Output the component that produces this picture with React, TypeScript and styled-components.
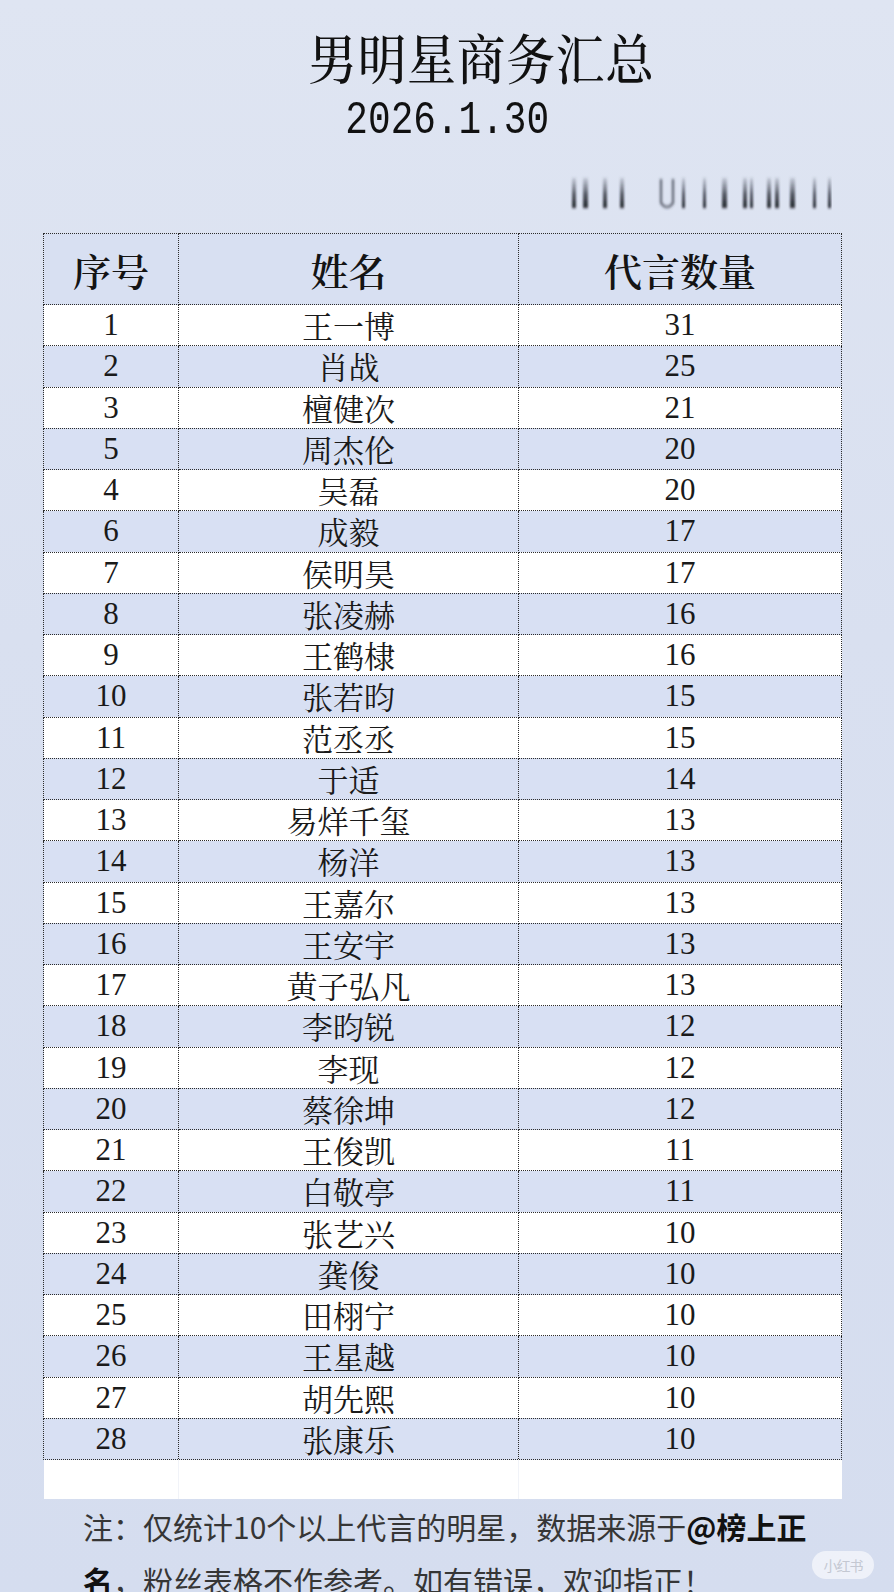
import React from 'react'
import styled, { createGlobalStyle } from 'styled-components'

const CJK = `"Noto Serif CJK SC", "Noto Sans CJK SC", sans-serif`
const SERIF_NUM = `"Liberation Serif", "Noto Sans CJK SC", serif`

const GlobalStyle = createGlobalStyle`
  html, body {
    margin: 0;
    padding: 0;
  }
  body {
    background: #d8dfef;
  }
`

const rows: [string, string, number][] = [
  ['1', '王一博', 31],
  ['2', '肖战', 25],
  ['3', '檀健次', 21],
  ['5', '周杰伦', 20],
  ['4', '吴磊', 20],
  ['6', '成毅', 17],
  ['7', '侯明昊', 17],
  ['8', '张凌赫', 16],
  ['9', '王鹤棣', 16],
  ['10', '张若昀', 15],
  ['11', '范丞丞', 15],
  ['12', '于适', 14],
  ['13', '易烊千玺', 13],
  ['14', '杨洋', 13],
  ['15', '王嘉尔', 13],
  ['16', '王安宇', 13],
  ['17', '黄子弘凡', 13],
  ['18', '李昀锐', 12],
  ['19', '李现', 12],
  ['20', '蔡徐坤', 12],
  ['21', '王俊凯', 11],
  ['22', '白敬亭', 11],
  ['23', '张艺兴', 10],
  ['24', '龚俊', 10],
  ['25', '田栩宁', 10],
  ['26', '王星越', 10],
  ['27', '胡先熙', 10],
  ['28', '张康乐', 10],
]

// blurred strip under the date, roughly where the bars sit
const bars = [
  [2, 4], [13, 5], [33, 4], [50, 4], [112, 3], [133, 3], [152, 5],
  [173, 4], [180, 3], [197, 4], [205, 4], [220, 5], [243, 3], [258, 3],
]

const Page = styled.div`
  position: relative;
  width: 894px;
  height: 1592px;
  overflow: hidden;
  background: linear-gradient(180deg, #dfe5f2 0%, #d9e0f0 40%, #d5ddef 100%);
  padding-top: 30px;
  box-sizing: border-box;
`

const Title = styled.h1`
  margin: 0;
  padding-left: 68px;
  text-align: center;
  font-family: ${CJK};
  font-size: 54px;
  font-weight: 500;
  line-height: 54px;
  letter-spacing: 1px;
  color: #111;
`

const Squeeze = styled.span<{ $x: number }>`
  display: inline-block;
  transform: scaleX(${(p) => p.$x});
  transform-origin: center;
`

const DateLine = styled.div`
  margin-top: 15px;
  text-align: center;
  font-family: "Liberation Mono", monospace;
  font-size: 46px;
  line-height: 44px;
  color: #111;
`

const StripRow = styled.div`
  display: flex;
  justify-content: flex-end;
  padding-right: 62px;
  margin-top: 32px;
  height: 36px;
  margin-bottom: 22px;
`

const Table = styled.table`
  margin-left: 43px;
  width: 795px;
  border-collapse: collapse;
  table-layout: fixed;
`

const HeadCell = styled.th<{ $w: number }>`
  width: ${(p) => p.$w}px;
  height: 70px;
  padding: 0;
  border: 1px dotted #2b2b2b;
  background: #d8e0f2;
  font-family: ${CJK};
  font-size: 38px;
  font-weight: 600;
  color: #141414;
  text-align: center;
`

const Row = styled.tr<{ $blue: boolean }>`
  height: 41.25px;
  background: ${(p) => (p.$blue ? '#d8e0f3' : '#ffffff')};
`

const Cell = styled.td<{ $num?: boolean }>`
  padding: 0;
  border: 1px dotted #2b2b2b;
  text-align: center;
  font-family: ${(p) => (p.$num ? SERIF_NUM : CJK)};
  font-size: 31px;
  line-height: 38px;
  color: #1a1a1a;
`

const BlankCell = styled.td`
  height: 39px;
  padding: 0;
  background: #fff;
  border: none;
  border-right: 1px solid #f1f3f8;
  &:last-child {
    border-right: none;
  }
`

const Footer = styled.div`
  position: relative;
  padding-left: 83px;
  font-family: "Noto Sans CJK SC", sans-serif;
  font-size: 30px;
  line-height: 54px;
  color: #363636;
`

const Line = styled.div`
  white-space: nowrap;
`

const Strong = styled.b`
  font-weight: 700;
  color: #111;
`

const Badge = styled.div`
  position: absolute;
  left: 812px;
  top: 52px;
  width: 62px;
  height: 28px;
  border-radius: 14px;
  background: rgba(255, 255, 255, 0.6);
  color: #c4c8d2;
  font-size: 14px;
  line-height: 28px;
  text-align: center;
  letter-spacing: -1px;
`

const BlurStrip = () => (
  <svg width="262" height="36" viewBox="0 0 262 36">
    <defs>
      <linearGradient id="bar" x1="0" y1="0" x2="0" y2="1">
        <stop offset="0" stopColor="#3a3f4d" stopOpacity="0.15" />
        <stop offset="0.55" stopColor="#2a2e3a" stopOpacity="0.75" />
        <stop offset="1" stopColor="#1b1e27" stopOpacity="0.95" />
      </linearGradient>
      <filter id="soft" x="-20%" y="-20%" width="140%" height="140%">
        <feGaussianBlur stdDeviation="1 1.6" />
      </filter>
    </defs>
    <g filter="url(#soft)">
      {bars.map(([x, w], i) => (
        <rect key={i} x={x} y={3} width={w} height={30} fill="url(#bar)" />
      ))}
      <path
        d="M91 4 V28 Q97 36 103 28 V4"
        fill="none"
        stroke="#3a3f4d"
        strokeOpacity="0.7"
        strokeWidth="2.5"
      />
    </g>
  </svg>
)

export default function App() {
  return (
    <>
      <GlobalStyle />
      <Page>
        <Title>
          <Squeeze $x={0.9}>男明星商务汇总</Squeeze>
        </Title>
        <DateLine>
          <Squeeze $x={0.82}>2026.1.30</Squeeze>
        </DateLine>
        <StripRow>
          <BlurStrip />
        </StripRow>
        <Table>
          <thead>
            <tr>
              <HeadCell $w={134}>序号</HeadCell>
              <HeadCell $w={339}>姓名</HeadCell>
              <HeadCell $w={322}>代言数量</HeadCell>
            </tr>
          </thead>
          <tbody>
            {rows.map(([no, name, count], i) => (
              <Row key={no} $blue={i % 2 === 1}>
                <Cell $num>{no}</Cell>
                <Cell>{name}</Cell>
                <Cell $num>{count}</Cell>
              </Row>
            ))}
            <tr>
              <BlankCell />
              <BlankCell />
              <BlankCell />
            </tr>
          </tbody>
        </Table>
        <Footer>
          <Line>
            注：仅统计10个以上代言的明星，数据来源于<Strong>@榜上正</Strong>
          </Line>
          <Line>
            <Strong>名</Strong>，粉丝表格不作参考。如有错误，欢迎指正！
          </Line>
          <Badge>小红书</Badge>
        </Footer>
      </Page>
    </>
  )
}
